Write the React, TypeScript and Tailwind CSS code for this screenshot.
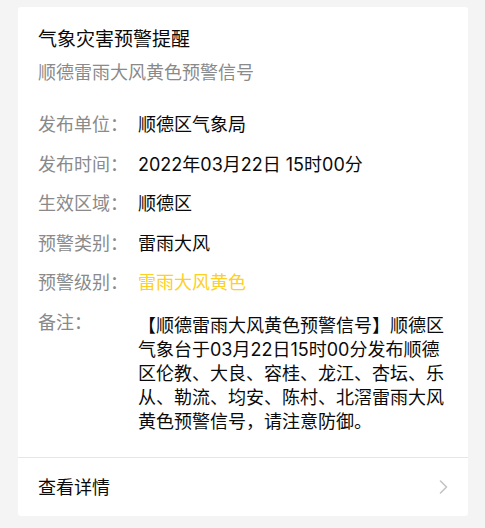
import * as React from 'react';

interface IField {
  label: string;
  value: string;
  highlight?: boolean;
}

const fields: IField[] = [
  { label: '发布单位：', value: '顺德区气象局' },
  { label: '发布时间：', value: '2022年03月22日 15时00分' },
  { label: '生效区域：', value: '顺德区' },
  { label: '预警类别：', value: '雷雨大风' },
  { label: '预警级别：', value: '雷雨大风黄色', highlight: true }
];

const remark =
  '【顺德雷雨大风黄色预警信号】顺德区气象台于03月22日15时00分发布顺德区伦教、大良、容桂、龙江、杏坛、乐从、勒流、均安、陈村、北滘雷雨大风黄色预警信号，请注意防御。';

const FONT = "font-['Inter','Noto_Sans_CJK_SC',sans-serif]";

export default function App() {
  return (
    <div className={`min-h-[528px] w-[485px] bg-[#f4f4f4] pt-[7px] pl-[18px] ${FONT}`}>
      <div className="w-[450px] rounded-[3px] bg-white">
        <div className="px-[20px] pt-[20px] pb-[23px]">
          <div className="text-[19px] leading-[26px] text-[#0a0a0a]">气象灾害预警提醒</div>
          <div className="mt-[8px] text-[18px] leading-[24px] text-[#8a8a8a]">
            顺德雷雨大风黄色预警信号
          </div>

          <div className="mt-[28px] flex flex-col gap-[15.6px] text-[18px] leading-[24px]">
            {fields.map((f) => (
              <div key={f.label} className="flex">
                <span className="w-[100px] shrink-0 text-[#8a8a8a]">{f.label}</span>
                <span className={f.highlight ? 'text-[#fdd022]' : 'text-[#0a0a0a]'}>{f.value}</span>
              </div>
            ))}
            <div className="flex">
              <span className="w-[100px] shrink-0 text-[#8a8a8a]">备注：</span>
              <p className="mt-[3px] w-[310px] text-[#0a0a0a]">{remark}</p>
            </div>
          </div>
        </div>

        <div className="h-px bg-[#e6e6e6]" />

        <div className="flex h-[58px] items-center justify-between pt-[2px] pl-[20px] pr-[20px]">
          <span className="text-[18px] leading-[24px] text-[#0a0a0a]">查看详情</span>
          <svg width="9" height="14" viewBox="0 0 9 14" fill="none" className="-mt-[2px]">
            <polyline
              points="1.5,1 7.5,7 1.5,13"
              stroke="#c4c4c4"
              strokeWidth="1.6"
              strokeLinecap="round"
              strokeLinejoin="round"
            />
          </svg>
        </div>
      </div>
    </div>
  );
}
